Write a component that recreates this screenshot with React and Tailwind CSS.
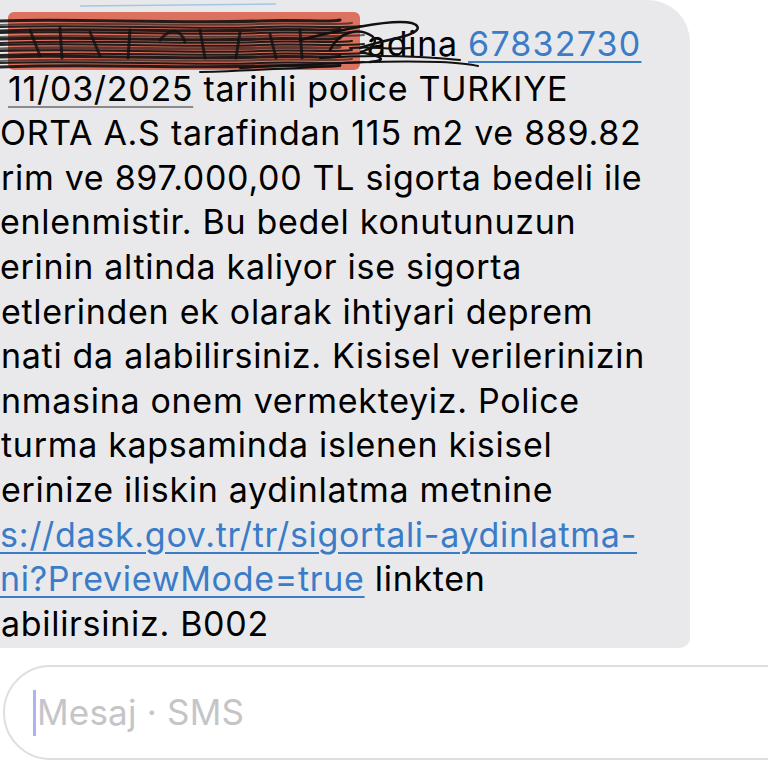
import React from "react";

const blue = "text-[#3a7cc8] underline decoration-[#3a7cc8] decoration-2 underline-offset-[5px]";

function Redaction() {
  const ys = [];
  for (let y = 21; y <= 66; y += 3) ys.push(y);
  return (
    <svg className="absolute left-0 top-0" width="480" height="80" viewBox="0 0 480 80">
      <path d="M80 6 L276 4" stroke="#9ec9ea" strokeWidth="1.5" fill="none" />
      <rect x="8" y="12" width="352" height="58" rx="6" fill="#dc6450" opacity="0.9" />
      <g stroke="#111" fill="none" strokeLinecap="round">
        {ys.map((y, i) => (
          <path
            key={y}
            d={`M0 ${y + (i % 2)} C${70 + (i % 4) * 10} ${y - 3} ${170 + (i % 3) * 12} ${y + 3} 260 ${y} C300 ${y - 2} 330 ${y + 2} ${340 + (i % 3) * 12} ${y - 1}`}
            strokeWidth={i % 3 === 0 ? 3 : 2}
            opacity={i % 4 === 1 ? 0.6 : 0.9}
          />
        ))}
        <path d="M30 30 L40 56 M60 28 L62 58 M90 32 L100 56 M130 30 L128 58 M160 40 C170 28 180 28 185 42 M200 30 L205 58 M240 32 L236 58 M270 34 L276 58 M300 30 L302 58" strokeWidth="3" opacity="0.8" />
        <path d="M330 50 C340 30 360 28 372 36 C380 42 370 50 360 52 C380 56 390 60 370 62" strokeWidth="2.5" />
        <path d="M300 40 C340 30 380 22 400 22 C420 22 425 30 405 36 C390 40 370 44 360 48" strokeWidth="2.5" />
        <path d="M240 68 C320 64 380 60 440 62 C460 63 470 64 478 66" strokeWidth="2" />
        <path d="M320 58 C380 54 420 56 460 60" strokeWidth="2" />
        <path d="M200 72 C260 70 300 68 340 66" strokeWidth="2" />
        <path d="M350 48 C370 46 390 50 410 48" strokeWidth="2" />
      </g>
    </svg>
  );
}

export default function App() {
  const lines = [
    { pl: "pl-[367px]", content: <><span>adina</span> <span className={`${blue} tracking-[1.2px]`}>67832730</span></> },
    { pl: "pl-[8px]", content: <><span className="underline decoration-[#8a8a8e] decoration-2 underline-offset-[5px]">11/03/2025</span> tarihli police TURKIYE</> },
    { pl: "pl-[0px]", content: "ORTA A.S tarafindan 115 m2 ve 889.82" },
    { pl: "pl-[1px]", content: "rim ve 897.000,00 TL sigorta bedeli ile" },
    { pl: "pl-[0px]", content: "enlenmistir. Bu bedel konutunuzun" },
    { pl: "pl-[0px]", content: "erinin altinda kaliyor ise sigorta" },
    { pl: "pl-[1px]", content: "etlerinden ek olarak ihtiyari deprem" },
    { pl: "pl-[1px]", content: "nati da alabilirsiniz. Kisisel verilerinizin" },
    { pl: "pl-[1px]", content: "nmasina onem vermekteyiz. Police" },
    { pl: "pl-[1px]", content: "turma kapsaminda islenen kisisel" },
    { pl: "pl-[1px]", content: "erinize iliskin aydinlatma metnine" },
    { pl: "pl-[0px]", content: <span className={blue}>s://dask.gov.tr/tr/sigortali-aydinlatma-</span> },
    { pl: "pl-[0px]", content: <><span className={blue}>ni?PreviewMode=true</span> linkten</> },
    { pl: "pl-[1px]", content: "abilirsiniz. B002" },
  ];
  return (
    <div className="w-[768px] h-[768px] bg-white overflow-hidden relative" style={{ fontFamily: "Inter, 'Noto Sans', sans-serif" }}>
      <div className="ml-[-40px] w-[730px] h-[648px] bg-[#e9e9eb] rounded-tr-[42px] rounded-br-[10px] pl-[40px] pt-[22px] relative">
        <div className="text-[34px] leading-[44.6px] text-black whitespace-nowrap tracking-[0.7px]">
          {lines.map((l, i) => (
            <div key={i} className={l.pl}>{l.content}</div>
          ))}
        </div>
        <div className="absolute left-[40px] top-0">
          <Redaction />
        </div>
      </div>
      <div className="mt-[17px] ml-[3px] w-[820px] h-[95px] rounded-[48px] border-2 border-[#dedee0] flex items-center pl-[28px]">
        <div className="w-[3px] h-[46px] bg-[#aab4ee] mr-[1px]" />
        <span className="text-[35px] text-[#c5c5c8] tracking-[0.2px]">Mesaj · SMS</span>
      </div>
    </div>
  );
}
